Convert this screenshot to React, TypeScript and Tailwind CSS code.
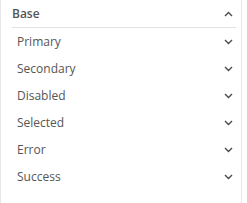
const ITEMS = ["Primary", "Secondary", "Disabled", "Selected", "Error", "Success"];

function Chevron({ up = false }: { up?: boolean }) {
  return (
    <svg width="9" height="6" viewBox="0 0 9 6" className="shrink-0">
      <path
        d={up ? "M1 5 L4.5 1.5 L8 5" : "M1 1 L4.5 4.5 L8 1"}
        fill="none"
        stroke="#4a4a4a"
        strokeWidth="1.4"
      />
    </svg>
  );
}

export default function App() {
  return (
    <div className="h-[203px] w-[247px] bg-white font-['Open_Sans',sans-serif]">
      <div className="h-full w-[242px] border-x border-[#e6e6e6]">
        <div className="mx-[11px] mr-[5px] flex h-[28px] items-center justify-between border-b border-[#e3e3e3] pr-[3px]">
          <span className="text-[12px] font-semibold text-[#555]">Base</span>
          <Chevron up />
        </div>
        {ITEMS.map((item) => (
          <div
            key={item}
            className="flex h-[27px] items-center justify-between pl-[16px] pr-[8px]"
          >
            <span className="text-[12px] text-[#555]">{item}</span>
            <Chevron />
          </div>
        ))}
      </div>
    </div>
  );
}
